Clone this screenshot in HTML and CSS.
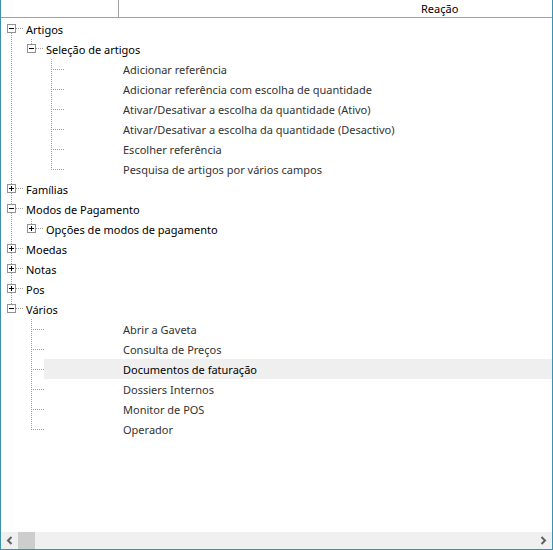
FILE: index.html
```html
<!DOCTYPE html>
<html lang="pt">
<head>
    <meta charset="UTF-8">
    <title>Reações</title>
    <link rel="stylesheet" href="styles.css">
</head>
<body>
    <div class="frame">
        <div class="header">
            <div class="col-tree"></div>
            <div class="col-reacao">Reação</div>
        </div>

        <div class="tree">
            <div class="row"><span class="exp minus down"><i></i></span><span class="label group">Artigos</span></div>
            <div class="row"><span class="ind v"></span><span class="exp minus up"><i></i></span><span class="label group">Seleção de artigos</span></div>
            <div class="row"><span class="ind v"></span><span class="ind"></span><span class="leaf tee"></span><span class="label item l2">Adicionar referência</span></div>
            <div class="row"><span class="ind v"></span><span class="ind"></span><span class="leaf tee"></span><span class="label item l2">Adicionar referência com escolha de quantidade</span></div>
            <div class="row"><span class="ind v"></span><span class="ind"></span><span class="leaf tee"></span><span class="label item l2">Ativar/Desativar a escolha da quantidade (Ativo)</span></div>
            <div class="row"><span class="ind v"></span><span class="ind"></span><span class="leaf tee"></span><span class="label item l2">Ativar/Desativar a escolha da quantidade (Desactivo)</span></div>
            <div class="row"><span class="ind v"></span><span class="ind"></span><span class="leaf tee"></span><span class="label item l2">Escolher referência</span></div>
            <div class="row"><span class="ind v"></span><span class="ind"></span><span class="leaf ell"></span><span class="label item l2">Pesquisa de artigos por vários campos</span></div>
            <div class="row"><span class="exp plus up down"><i></i></span><span class="label group">Famílias</span></div>
            <div class="row"><span class="exp minus up down"><i></i></span><span class="label group">Modos de Pagamento</span></div>
            <div class="row"><span class="ind v"></span><span class="exp plus up"><i></i></span><span class="label group">Opções de modos de pagamento</span></div>
            <div class="row"><span class="exp plus up down"><i></i></span><span class="label group">Moedas</span></div>
            <div class="row"><span class="exp plus up down"><i></i></span><span class="label group">Notas</span></div>
            <div class="row"><span class="exp plus up down"><i></i></span><span class="label group">Pos</span></div>
            <div class="row"><span class="exp minus up"><i></i></span><span class="label group">Vários</span></div>
            <div class="row"><span class="ind"></span><span class="leaf tee"></span><span class="label item l1">Abrir a Gaveta</span></div>
            <div class="row"><span class="ind"></span><span class="leaf tee"></span><span class="label item l1">Consulta de Preços</span></div>
            <div class="row"><span class="ind"></span><span class="leaf tee"></span><span class="label item l1 selected">Documentos de faturação</span></div>
            <div class="row"><span class="ind"></span><span class="leaf tee"></span><span class="label item l1">Dossiers Internos</span></div>
            <div class="row"><span class="ind"></span><span class="leaf tee"></span><span class="label item l1">Monitor de POS</span></div>
            <div class="row"><span class="ind"></span><span class="leaf ell"></span><span class="label item l1">Operador</span></div>
        </div>

        <div class="hscroll">
            <span class="sb-btn">
                <svg width="17" height="17" viewBox="0 0 17 17"><polyline points="10.5,5 7,8.5 10.5,12" fill="none" stroke="#606060" stroke-width="2"/></svg>
            </span>
            <span class="sb-thumb"></span>
            <span class="sb-track"></span>
            <span class="sb-btn">
                <svg width="17" height="17" viewBox="0 0 17 17"><polyline points="6.5,5 10,8.5 6.5,12" fill="none" stroke="#606060" stroke-width="2"/></svg>
            </span>
        </div>
    </div>
</body>
</html>
```

FILE: styles.css
```css
body {
    margin: 0;
    font-family: "Noto Sans", "Open Sans", sans-serif;
    font-size: 11px;
    background: #fff;
}
.frame {
    width: 553px;
    height: 550px;
    box-sizing: border-box;
    border: 1px solid #3c91ad;
    border-top: none;
    display: flex;
    flex-direction: column;
    overflow: hidden;
}
.header {
    display: flex;
    height: 17px;
    border-bottom: 1px solid #a0a0a0;
    flex-shrink: 0;
}
.col-tree {
    width: 117px;
    border-right: 1px solid #a0a0a0;
}
.col-reacao {
    padding-left: 302px;
    line-height: 18px;
    color: #000;
    white-space: nowrap;
}
.tree {
    flex: 1;
    padding-top: 1px;
}
.row {
    display: flex;
    height: 20px;
}
.ind {
    width: 20px;
    flex-shrink: 0;
}
.ind.v {
    background: repeating-linear-gradient(to bottom, #a0a0a0 0 1px, transparent 1px 2px) 10px 0 / 1px 100% no-repeat;
}
.exp, .leaf {
    width: 23px;
    flex-shrink: 0;
    background-repeat: no-repeat;
}
.exp {
    background-image: repeating-linear-gradient(to right, #a0a0a0 0 1px, transparent 1px 2px);
    background-position: 15px 9px;
    background-size: 8px 1px;
}
.exp.up {
    background-image: repeating-linear-gradient(to right, #a0a0a0 0 1px, transparent 1px 2px),
                      repeating-linear-gradient(to bottom, #a0a0a0 0 1px, transparent 1px 2px);
    background-position: 15px 9px, 10px 0;
    background-size: 8px 1px, 1px 5px;
}
.exp.down {
    background-image: repeating-linear-gradient(to right, #a0a0a0 0 1px, transparent 1px 2px),
                      repeating-linear-gradient(to bottom, #a0a0a0 0 1px, transparent 1px 2px);
    background-position: 15px 9px, 10px 14px;
    background-size: 8px 1px, 1px 6px;
}
.exp.up.down {
    background-image: repeating-linear-gradient(to right, #a0a0a0 0 1px, transparent 1px 2px),
                      repeating-linear-gradient(to bottom, #a0a0a0 0 1px, transparent 1px 2px),
                      repeating-linear-gradient(to bottom, #a0a0a0 0 1px, transparent 1px 2px);
    background-position: 15px 9px, 10px 0, 10px 14px;
    background-size: 8px 1px, 1px 5px, 1px 6px;
}
.exp i {
    display: block;
    width: 9px;
    height: 9px;
    box-sizing: border-box;
    margin: 5px 0 0 6px;
    border: 1px solid #919191;
    background: #fff;
}
.exp.minus i {
    background: linear-gradient(#000, #000) center / 5px 1px no-repeat, #fff;
}
.exp.plus i {
    background: linear-gradient(#000, #000) center / 5px 1px no-repeat,
                linear-gradient(#000, #000) center / 1px 5px no-repeat, #fff;
}
.leaf.tee {
    background-image: repeating-linear-gradient(to bottom, #a0a0a0 0 1px, transparent 1px 2px),
                      repeating-linear-gradient(to right, #a0a0a0 0 1px, transparent 1px 2px);
    background-position: 10px 0, 12px 10px;
    background-size: 1px 100%, 11px 1px;
}
.leaf.ell {
    background-image: repeating-linear-gradient(to bottom, #a0a0a0 0 1px, transparent 1px 2px),
                      repeating-linear-gradient(to right, #a0a0a0 0 1px, transparent 1px 2px);
    background-position: 10px 0, 12px 10px;
    background-size: 1px 11px, 11px 1px;
}
.label {
    line-height: 21px;
    white-space: nowrap;
}
.group {
    padding-left: 2px;
    color: #000;
}
.item {
    flex: 1;
    color: #333;
}
.item.l1 {
    padding-left: 79px;
}
.item.l2 {
    padding-left: 59px;
}
.item.selected {
    background: #efefef;
    color: #000;
}
.hscroll {
    display: flex;
    height: 17px;
    background: #f0f0f0;
    flex-shrink: 0;
}
.sb-btn {
    width: 17px;
    height: 17px;
}
.sb-btn svg {
    display: block;
}
.sb-thumb {
    width: 17px;
    background: #cdcdcd;
}
.sb-track {
    flex: 1;
}
```
